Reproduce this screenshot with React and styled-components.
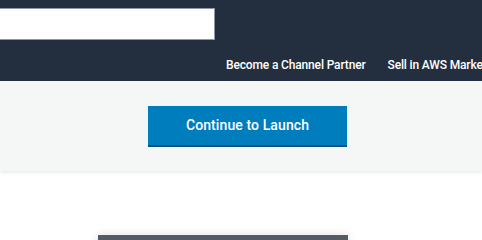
import React from 'react';
import styled, { createGlobalStyle } from 'styled-components';

const GlobalStyle = createGlobalStyle`
  html, body {
    margin: 0;
    padding: 0;
    background: #fff;
    overflow: hidden;
  }
  body {
    font-family: Roboto, "Liberation Sans", Arial, sans-serif;
  }
`;

const Header = styled.header`
  background: #232f3e;
  height: 81px;
  display: flex;
  flex-direction: column;
  box-sizing: border-box;
  padding-top: 8px;
  overflow: hidden;
`;

const Search = styled.input`
  width: 215px;
  height: 32px;
  box-sizing: border-box;
  border: 1px solid #8d99a8;
  border-left: none;
  background: #fff;
  outline: none;
  margin: 0;
`;

const Nav = styled.nav`
  display: flex;
  gap: 22px;
  margin-top: 17px;
  padding-left: 226px;
  white-space: nowrap;
`;

const NavLink = styled.a`
  color: #fff;
  font-size: 12px;
  font-weight: 500;
  line-height: 16px;
  text-decoration: none;
  letter-spacing: -0.15px;
`;

const Band = styled.section`
  background: #f5f6f6;
  height: 90px;
  display: flex;
  align-items: center;
  padding-left: 148px;
  box-shadow: 0 2px 3px rgba(0, 0, 0, 0.08);
  position: relative;
`;

const LaunchButton = styled.button`
  width: 199px;
  height: 41px;
  background: #007dbc;
  border: none;
  border-bottom: 2px solid #0b4f85;
  color: #fff;
  font-family: Roboto, "Liberation Sans", Arial, sans-serif;
  font-size: 14px;
  font-weight: 500;
  letter-spacing: 0.1px;
  padding: 0;
  cursor: pointer;
`;

const Body = styled.main`
  padding: 64px 0 0 98px;
`;

const Panel = styled.div`
  width: 250px;
  height: 60px;
  background: #545b64;
  box-shadow: 0 0 10px rgba(0, 0, 0, 0.12);
`;

export default function App() {
  return (
    <>
      <GlobalStyle />
      <Header>
        <Search type="text" aria-label="Search" />
        <Nav>
          <NavLink href="#">Become a Channel Partner</NavLink>
          <NavLink href="#">Sell in AWS Marketplace</NavLink>
        </Nav>
      </Header>
      <Band>
        <LaunchButton>Continue to Launch</LaunchButton>
      </Band>
      <Body>
        <Panel />
      </Body>
    </>
  );
}
